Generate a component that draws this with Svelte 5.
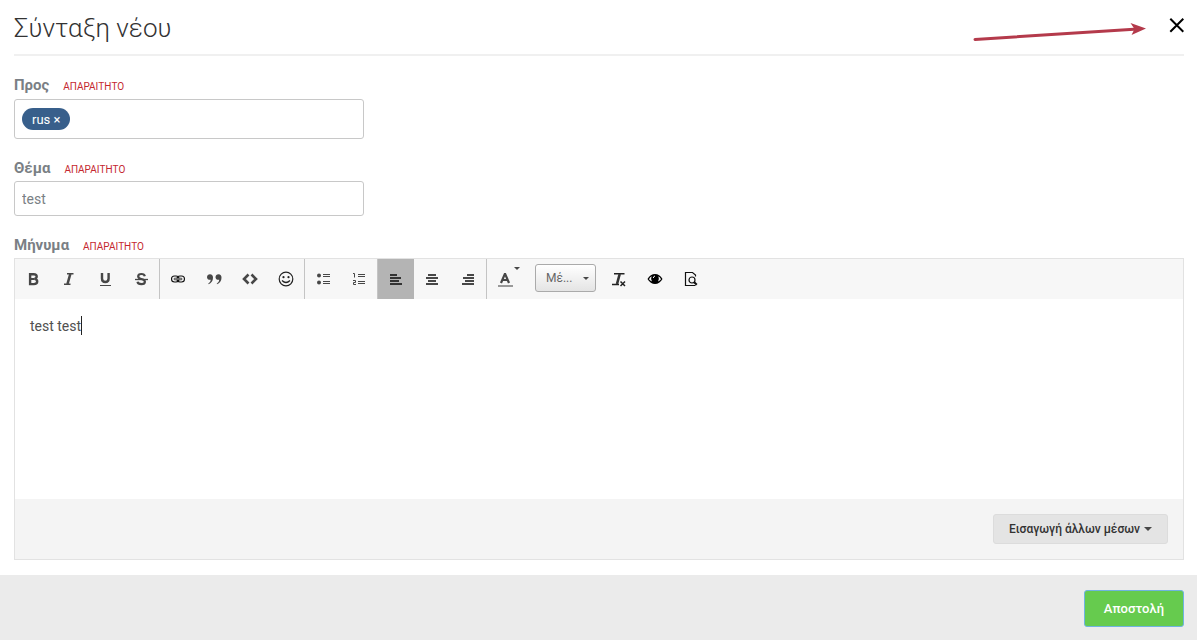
<script lang="ts">
  let recipients = $state(['rus']);
  let recipientInput = $state('');
  let subject = $state('test');
  let message = $state('test test');
  let align = $state<'left' | 'center' | 'right'>('left');

  function removeRecipient(name: string) {
    recipients = recipients.filter((r) => r !== name);
  }

  function addRecipient(e: KeyboardEvent) {
    if (e.key !== 'Enter' || !recipientInput.trim()) return;
    e.preventDefault();
    recipients = [...recipients, recipientInput.trim()];
    recipientInput = '';
  }
</script>

<form class="compose" onsubmit={(e) => e.preventDefault()}>
  <div class="content">
    <header>
      <h1>Σύνταξη νέου</h1>
      <svg class="arrow" width="174" height="24" viewBox="0 0 174 24">
        <path d="M3 18.5 162 8.200" stroke="#b43a4b" stroke-width="3" stroke-linecap="round" />
        <path d="M174 7.500 158.500 2l4 6-3 6z" fill="#b43a4b" />
      </svg>
      <button class="close" type="button" aria-label="Κλείσιμο">
        <svg width="16" height="16" viewBox="0 0 16 16">
          <path d="M2.300 1.800l13 13M15.300 1.800l-13 13" stroke="#000" stroke-width="2" />
        </svg>
      </button>
    </header>

    <div class="field">
      <div class="label-row">
        <label for="to">Προς</label>
        <span class="required">ΑΠΑΡΑΙΤΗΤΟ</span>
      </div>
      <div class="recipients">
        {#each recipients as name (name)}
          <button class="tag" type="button" onclick={() => removeRecipient(name)}>{name} ×</button>
        {/each}
        <input id="to" type="text" bind:value={recipientInput} onkeydown={addRecipient} />
      </div>
    </div>

    <div class="field">
      <div class="label-row">
        <label for="subject">Θέμα</label>
        <span class="required">ΑΠΑΡΑΙΤΗΤΟ</span>
      </div>
      <input id="subject" class="text-input" type="text" bind:value={subject} />
    </div>

    <div class="field">
      <div class="label-row">
        <label for="message">Μήνυμα</label>
        <span class="required">ΑΠΑΡΑΙΤΗΤΟ</span>
      </div>
      <div class="editor">
        <div class="toolbar" role="toolbar">
          <div class="group">
            <button type="button" aria-label="Έντονα">
              <svg viewBox="0 0 16 16">
                <path
                  d="M5.100 3.200h3.600q3 0 3 2.300 0 1.800-2.200 2.400 2.700.4 2.700 2.600 0 2.600-3.400 2.600H5.100z"
                  fill="none"
                  stroke="#474747"
                  stroke-width="2.400"
                />
                <path d="M5 8h4.500" stroke="#474747" stroke-width="2" />
              </svg>
            </button>
            <button type="button" aria-label="Πλάγια">
              <svg viewBox="0 0 16 16">
                <path d="M6 2.800h6.500M3 13.200h6.500" stroke="#474747" stroke-width="1.600" />
                <path d="M9.300 3 6.500 13" stroke="#474747" stroke-width="2.600" />
              </svg>
            </button>
            <button type="button" aria-label="Υπογράμμιση">
              <svg viewBox="0 0 16 16">
                <path
                  d="M5 2v5.500q0 3.500 3.300 3.500t3.300-3.500V2"
                  fill="none"
                  stroke="#474747"
                  stroke-width="2.400"
                />
                <path d="M3 14.500h11" stroke="#474747" />
              </svg>
            </button>
            <button type="button" aria-label="Διακριτή διαγραφή">
              <svg viewBox="0 0 16 16">
                <path
                  d="M11.800 5.200q-.4-2.200-3.400-2.200-3.200 0-3.200 2.300 0 2.100 3.100 2.700 3.600.7 3.600 2.700 0 2.400-3.500 2.400-3.500 0-3.900-2.400"
                  fill="none"
                  stroke="#474747"
                  stroke-width="2.200"
                />
                <path d="M2 8.500h13" stroke="#474747" stroke-width="1.300" />
              </svg>
            </button>
          </div>

          <div class="group">
            <button type="button" aria-label="Σύνδεσμος">
              <svg viewBox="0 0 16 16" fill="none">
                <rect x="1.500" y="5" width="7.500" height="6" rx="3" stroke="#111" stroke-width="1.100" />
                <rect x="7" y="5" width="7.500" height="6" rx="3" stroke="#111" stroke-width="1.100" />
                <rect x="4" y="7.200" width="8" height="1.600" rx=".8" fill="#fff" stroke="#111" stroke-width=".8" />
              </svg>
            </button>
            <button type="button" aria-label="Παράθεση">
              <svg viewBox="0 0 16 16" fill="#474747">
                <path d="M4 3.300c2 0 3 1.300 3 3.400 0 3-1.800 5.500-4.500 6.500l-.3-.5c1.500-1 2.400-2.200 2.500-3.900C2.500 9 1 7.900 1 6.200c0-1.700 1.300-2.900 3-2.900z" />
                <path d="M12.500 3.300c2 0 3 1.300 3 3.400 0 3-1.800 5.500-4.500 6.500l-.3-.5c1.500-1 2.400-2.200 2.500-3.900C11 9 9.500 7.900 9.500 6.200c0-1.700 1.300-2.900 3-2.900z" />
              </svg>
            </button>
            <button type="button" aria-label="Κώδικας">
              <svg viewBox="0 0 16 16" fill="none">
                <path d="M6.500 3.500 2 8l4.500 4.500M9.500 3.500 14 8l-4.500 4.500" stroke="#474747" stroke-width="2.600" />
              </svg>
            </button>
            <button type="button" aria-label="Emoji">
              <svg viewBox="0 0 16 16" fill="none">
                <circle cx="8" cy="8" r="6.800" stroke="#222" stroke-width="1.200" />
                <circle cx="5.500" cy="6.200" r="1.100" fill="#222" />
                <circle cx="10.500" cy="6.200" r="1.100" fill="#222" />
                <path d="M4 9.500q4 4 8 0" stroke="#222" stroke-width="1.200" />
              </svg>
            </button>
          </div>

          <div class="group">
            <button type="button" aria-label="Λίστα με κουκκίδες">
              <svg viewBox="0 0 16 16">
                <circle cx="4" cy="4.500" r="2" fill="#474747" />
                <circle cx="4" cy="11.500" r="2" fill="#474747" />
                <path d="M8 3.500h7M8 5.500h7M8 10.500h7M8 12.500h7" stroke="#474747" />
              </svg>
            </button>
            <button type="button" aria-label="Αριθμημένη λίστα">
              <svg viewBox="0 0 16 16" fill="none" stroke="#474747">
                <path d="M7 3.500h7M7 5.500h7M7 10.500h7M7 12.500h7" />
                <path d="M2 2.500h1.500v4M2 9.500h2.500v2h-2v2H5" />
              </svg>
            </button>
          </div>

          <div class="group">
            <button
              type="button"
              class:active={align === 'left'}
              aria-label="Στοίχιση αριστερά"
              onclick={() => (align = 'left')}
            >
              <svg viewBox="0 0 16 16">
                <path d="M2 4h7M2 7h11M2 10h9M2 13h12" stroke="#333" stroke-width="2" />
              </svg>
            </button>
            <button
              type="button"
              class:active={align === 'center'}
              aria-label="Στοίχιση στο κέντρο"
              onclick={() => (align = 'center')}
            >
              <svg viewBox="0 0 16 16">
                <path d="M4 4h8M2 7h12M4 10h8M2 13h12" stroke="#474747" stroke-width="2" />
              </svg>
            </button>
            <button
              type="button"
              class:active={align === 'right'}
              aria-label="Στοίχιση δεξιά"
              onclick={() => (align = 'right')}
            >
              <svg viewBox="0 0 16 16">
                <path d="M7 4h7M3 7h11M5 10h9M2 13h12" stroke="#474747" stroke-width="2" />
              </svg>
            </button>
          </div>

          <div class="group">
            <button type="button" class="color" aria-label="Χρώμα κειμένου">
              <svg viewBox="0 0 16 16" fill="none">
                <path d="M4 12 7.800 3h.4L12 12M5.500 9h5" stroke="#474747" stroke-width="2.200" />
                <path d="M1 15h15" stroke="#999" stroke-width="2" />
              </svg>
              <span class="caret-down"></span>
            </button>
            <span class="size">
              <select aria-label="Μέγεθος">
                <option>Μέ...</option>
              </select>
              <span class="caret-down"></span>
            </span>
            <button type="button" aria-label="Εκκαθάριση μορφοποίησης">
              <svg viewBox="0 0 16 16" fill="none">
                <path d="M3 2.700h10.500M1 13.500h7" stroke="#222" stroke-width="1.500" />
                <path d="M8.700 3 6 13" stroke="#333" stroke-width="2.600" />
                <path d="m9.500 10.500 4.500 4.500m0-4.500L9.500 15" stroke="#222" stroke-width="1.500" />
              </svg>
            </button>
            <button type="button" aria-label="Προβολή">
              <svg viewBox="0 0 16 16">
                <path d="M.5 8Q3.500 3 8 3T15.500 8Q12.500 13 8 13T.5 8z" fill="#000" />
                <path d="M2 8.300q.8-2 2.600-3Q3.500 8 5 10.500 3 9.800 2 8.300zM14 8.300q-.8-2-2.600-3 1.100 2.700-.4 5.200 2-.7 3-2.200z" fill="#f7f7f7" />
                <path d="M6.300 7Q6.500 5.300 8 5" stroke="#f7f7f7" fill="none" />
              </svg>
            </button>
            <button type="button" aria-label="Προεπισκόπηση">
              <svg viewBox="0 0 16 16" fill="none" stroke="#111">
                <path d="M12.500 5.500V4L9.500 1.500h-7v13h10" stroke-width="1.200" />
                <circle cx="9" cy="9" r="3" stroke-width="1.200" />
                <path d="m11.200 11.200 2.600 2.600" stroke-width="2" />
              </svg>
            </button>
          </div>
        </div>

        <div class="body">
          <textarea id="message" class="align-{align}" bind:value={message}></textarea>
          <span class="cursor"></span>
        </div>

        <div class="editor-footer">
          <button class="insert" type="button">
            Εισαγωγή άλλων μέσων
            <span class="caret-down"></span>
          </button>
        </div>
      </div>
    </div>
  </div>

  <footer>
    <button class="send" type="submit">Αποστολή</button>
  </footer>
</form>

<style>
  :global(body) {
    background: #fff;
  }

  .compose,
  .compose button,
  .compose input,
  .compose select,
  .compose textarea {
    box-sizing: border-box;
    font-family: Roboto, 'Noto Sans', sans-serif;
  }

  button {
    cursor: pointer;
  }

  .content {
    padding: 0 13px 15px 14px;
  }

  header {
    display: flex;
    align-items: center;
    height: 54px;
    border-bottom: 2px solid #f0f0f0;
  }

  h1 {
    margin: 2px 0 0;
    font-size: 26px;
    line-height: 32px;
    font-weight: 300;
    color: #333;
  }

  .arrow {
    margin: 12px 22px 0 auto;
    fill: none;
  }

  .close {
    display: flex;
    padding: 0;
    margin-bottom: 4px;
    border: none;
    background: none;
  }

  .field {
    padding-top: 19px;
  }

  .label-row {
    display: flex;
    align-items: baseline;
    gap: 14px;
    height: 23px;
    line-height: 20px;
  }

  label {
    font-size: 15px;
    font-weight: 700;
    color: #7a7f85;
  }

  .required {
    font-size: 10px;
    color: #c5282f;
  }

  .recipients,
  .text-input {
    width: 350px;
    max-width: 100%;
    border: 1px solid #c8c8c8;
    border-radius: 3px;
    background: #fff;
  }

  .recipients {
    box-sizing: border-box;
    display: flex;
    align-items: center;
    height: 40px;
    margin-top: 1px;
    padding: 0 7px;
  }

  .recipients input {
    flex: 1;
    min-width: 0;
    border: none;
    outline: none;
  }

  .tag {
    height: 22px;
    padding: 0 10px;
    border: none;
    border-radius: 11px;
    background: #385f8b;
    color: #fff;
    font-size: 13px;
  }

  .text-input {
    display: block;
    height: 35px;
    padding: 0 7px;
    font-size: 14px;
    color: #7a7f85;
  }

  .editor {
    border: 1px solid #e2e2e2;
  }

  .toolbar {
    display: flex;
    flex-wrap: wrap;
    background: #f7f7f7;
  }

  .group {
    display: flex;
    align-items: center;
  }

  .group + .group {
    border-left: 1px solid #c4c4c4;
  }

  .toolbar button {
    display: flex;
    align-items: center;
    justify-content: center;
    width: 36px;
    height: 40px;
    padding: 0;
    border: none;
    background: none;
  }

  .toolbar button.active {
    background: #b4b4b4;
  }

  .toolbar svg {
    width: 16px;
    height: 16px;
  }

  .toolbar .color {
    position: relative;
  }

  .caret-down {
    display: inline-block;
    border: 3px solid transparent;
    border-top-color: #474747;
    border-bottom: none;
  }

  .color .caret-down {
    position: absolute;
    top: 8px;
    right: 3px;
  }

  .size {
    position: relative;
    margin: 0 5px 0 12px;
  }

  .size select {
    display: block;
    appearance: none;
    width: 61px;
    height: 28px;
    margin-bottom: 2px;
    padding: 0 10px;
    border: 1px solid #aaa;
    border-radius: 3px;
    background: linear-gradient(#fff, #e4e4e4);
    color: #666;
    font-size: 12px;
  }

  .size .caret-down {
    position: absolute;
    top: 13px;
    right: 7px;
    pointer-events: none;
  }

  .body {
    position: relative;
  }

  textarea {
    display: block;
    width: 100%;
    height: 200px;
    padding: 17px 15px;
    border: none;
    outline: none;
    resize: none;
    font-size: 14px;
    line-height: 20px;
    color: #505050;
  }

  .align-center {
    text-align: center;
  }

  .align-right {
    text-align: right;
  }

  .cursor {
    position: absolute;
    top: 17px;
    left: 66px;
    width: 1px;
    height: 19px;
    background: #222;
  }

  .editor-footer {
    display: flex;
    justify-content: flex-end;
    padding: 15px;
    background: #f4f4f4;
  }

  .insert {
    display: flex;
    align-items: center;
    gap: 4px;
    height: 30px;
    padding: 0 15px;
    border: 1px solid #dcdcdc;
    border-radius: 3px;
    background: #e4e4e4;
    color: #333;
    font-size: 12px;
    font-weight: 500;
  }

  .insert .caret-down {
    border-width: 4px 4px 0;
  }

  footer {
    display: flex;
    justify-content: flex-end;
    padding: 15px 13px 13px;
    background: #ebebeb;
  }

  .send {
    height: 37px;
    padding: 0 19px;
    border: 1px solid #6fb3e0;
    border-radius: 3px;
    background: #66cb4e;
    color: #fff;
    font-size: 13px;
    font-weight: 500;
  }
</style>
